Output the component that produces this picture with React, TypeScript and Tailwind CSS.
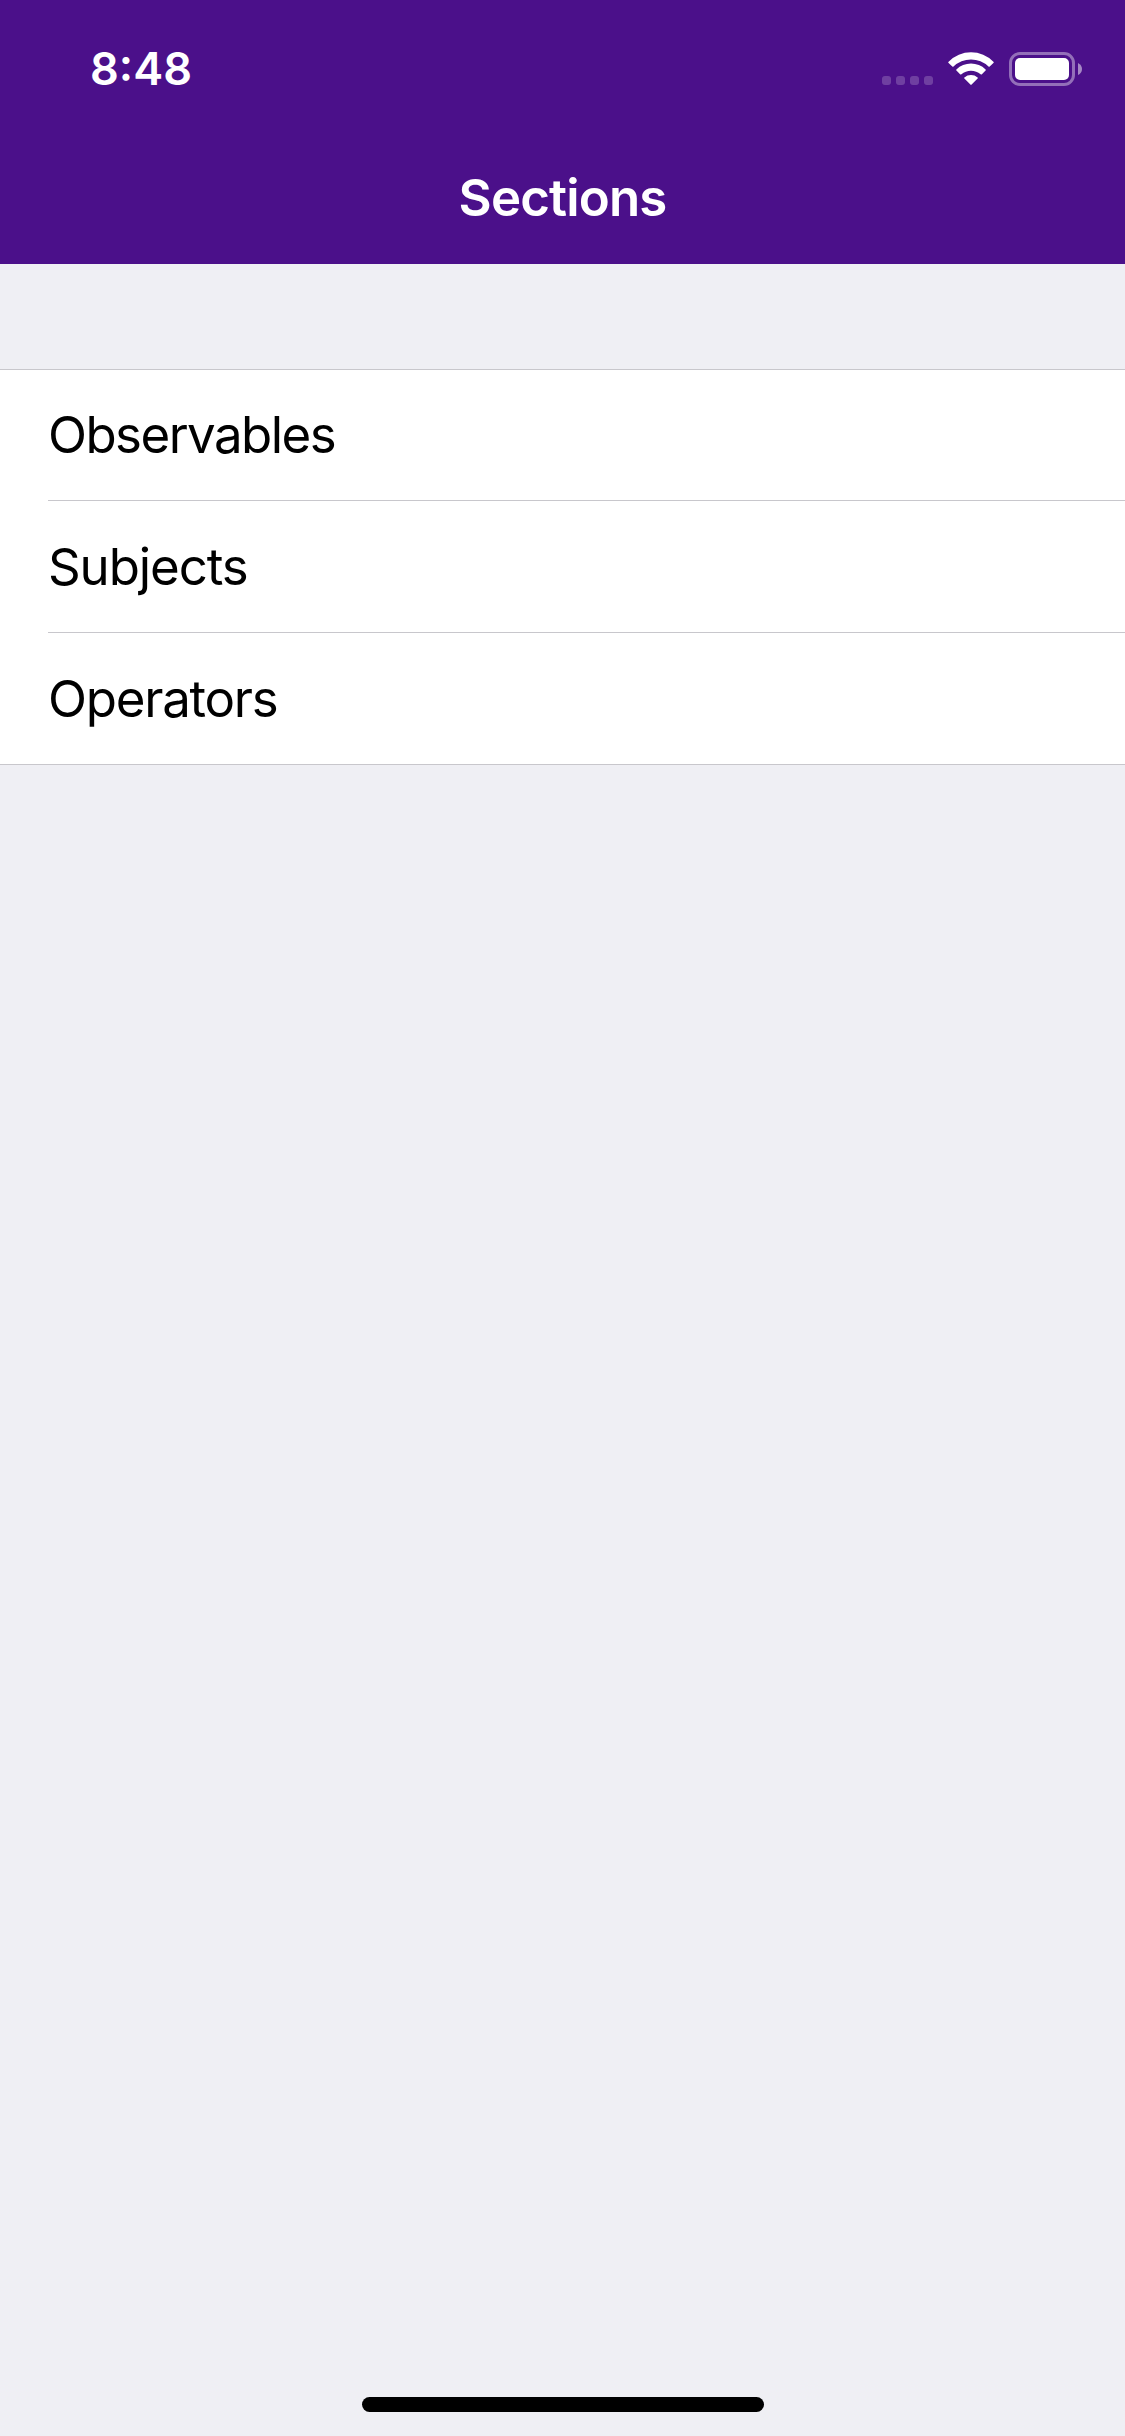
const sections = [
  { name: 'Observables', row: 'h-[131px] pb-px', tracking: 'tracking-[-1.55px]' },
  { name: 'Subjects', row: 'h-[132px] pt-px', tracking: 'tracking-[-1.1px]' },
  { name: 'Operators', row: 'h-[131px] pt-px', tracking: 'tracking-[-1.25px]' },
];

function WifiIcon() {
  return (
    <svg className="ml-[15px] h-[33px] w-[46px]" viewBox="0 0 46 33" fill="white">
      <path d="M.6 11.1Q-.1 10.4.6 9.7A31.4 31.4 0 0 1 45.4 9.7Q46.1 10.4 45.4 11.1L41.7 14.6Q41.1 15.1 40.5 14.6A25 25 0 0 0 5.5 14.6Q4.9 15.1 4.3 14.6Z" />
      <path d="M8.4 18.6Q7.8 18 8.4 17.4A21 21 0 0 1 37.6 17.4Q38.2 18 37.6 18.6L33.9 22.2Q33.3 22.8 32.6 22.3A14.5 14.5 0 0 0 13.4 22.3Q12.7 22.8 12.1 22.2Z" />
      <path d="M16.4 26.5Q15.8 25.9 16.4 25.4A10.2 10.2 0 0 1 29.6 25.4Q30.2 25.9 29.6 26.5L23.6 32.6Q23 33.2 22.4 32.6Z" />
    </svg>
  );
}

function Battery() {
  return (
    <div className="ml-[15px] flex items-center">
      <div className="h-[34px] w-[66px] rounded-[11px] border-[3px] border-white/40 p-[3px]">
        <div className="h-full w-full rounded-[5px] bg-white" />
      </div>
      <svg className="ml-[3px] h-[12px] w-[4px]" viewBox="0 0 4 12">
        <path d="M0 0Q4 2 4 6T0 12Z" fill="white" fillOpacity=".5" />
      </svg>
    </div>
  );
}

export default function App() {
  return (
    <div className="flex h-[2436px] w-[1125px] flex-col bg-[#efeff4] font-['Inter',sans-serif]">
      <header className="h-[264px] bg-[#4b108a] text-white">
        <div className="flex h-[132px] items-start justify-between pr-[43px] pl-[90px]">
          <span className="mt-[41px] text-[45px] leading-[56px] font-semibold">8:48</span>
          <div className="mt-[52px] flex items-start">
            <div className="mt-[24px] flex gap-[5px]">
              {[0, 1, 2, 3].map((dot) => (
                <span key={dot} className="size-[9px] rounded-[3px] bg-white/20" />
              ))}
            </div>
            <WifiIcon />
            <Battery />
          </div>
        </div>
        <h1 className="flex h-[132px] items-center justify-center text-[51px] leading-[64px] font-semibold tracking-[-0.85px]">
          Sections
        </h1>
      </header>
      <main className="mt-[105px] border-y border-[#c8c7cc] bg-white pl-[48px] text-black">
        <ul className="divide-y divide-[#c8c7cc]">
          {sections.map((section) => (
            <li key={section.name} className={`flex items-center text-[51px] leading-[64px] ${section.row} ${section.tracking}`}>
              {section.name}
            </li>
          ))}
        </ul>
      </main>
      <div className="mt-auto mb-[24px] ml-[362px] h-[15px] w-[402px] rounded-full bg-black" />
    </div>
  );
}
